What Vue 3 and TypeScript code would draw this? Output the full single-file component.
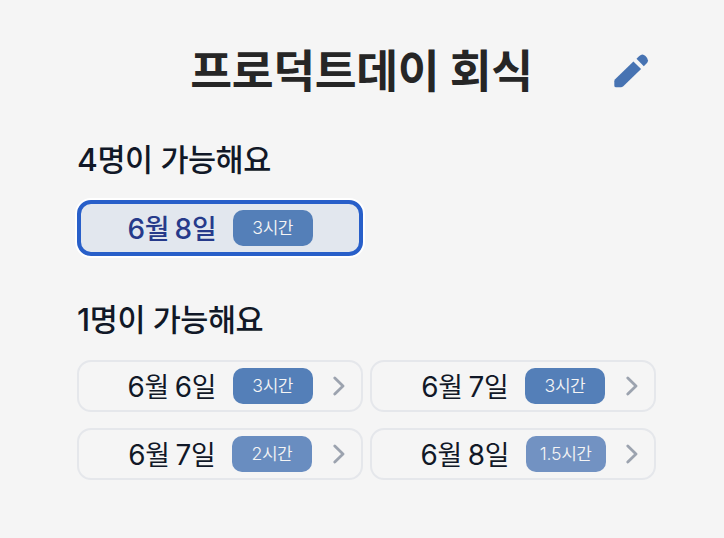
<script setup lang="ts">
interface Slot {
  month: string
  day: string
  hours: string
  tone: 'high' | 'mid' | 'low'
  selected?: boolean
}

interface Group {
  people: string
  slots: Slot[]
}

const groups: Group[] = [
  {
    people: '4',
    slots: [{ month: '6', day: '8', hours: '3', tone: 'high', selected: true }],
  },
  {
    people: '1',
    slots: [
      { month: '6', day: '6', hours: '3', tone: 'high' },
      { month: '6', day: '7', hours: '3', tone: 'high' },
      { month: '6', day: '7', hours: '2', tone: 'mid' },
      { month: '6', day: '8', hours: '1.5', tone: 'low' },
    ],
  },
]
</script>

<template>
  <main class="page">
    <header class="header">
      <h1 class="title">프로덕트데이 회식</h1>
      <button class="edit" aria-label="수정">
        <svg width="36" height="36" viewBox="0 0 36 36" fill="#4773b2">
          <path d="M20.4 8.4 L28.1 15.9 L10.3 33.2 Q9.1 34.3 7.9 34.3 H3.2 Q1.3 34.3 1.3 32.4 V28.2 Q1.3 27.1 2.1 26.3 Z" />
          <path d="M23.5 5.8 L26.3 3 Q29.4 0 32.5 3 Q36.6 7 34 10 L30.8 13.2 Z" />
        </svg>
      </button>
    </header>

    <section v-for="group in groups" :key="group.people" class="group">
      <h2 class="group-title"><span class="num">{{ group.people }}</span>명이 가능해요</h2>
      <div class="slots">
        <button
          v-for="(slot, i) in group.slots"
          :key="i"
          class="slot"
          :class="{ selected: slot.selected }"
        >
          <span class="date"><span class="num">{{ slot.month }}</span>월 <span class="num">{{ slot.day }}</span>일</span>
          <span class="badge" :class="slot.tone"><span><span class="num">{{ slot.hours }}</span>시간</span></span>
          <svg v-if="!slot.selected" class="chevron" width="12" height="20" viewBox="0 0 12 20">
            <path d="M1.8 2 L10 10 L1.8 18" fill="none" stroke="#9ca3af" stroke-width="2.8" stroke-linecap="round" stroke-linejoin="round" />
          </svg>
        </button>
      </div>
    </section>
  </main>
</template>

<style>
body {
  background: #f5f5f5;
}
</style>

<style scoped>
.page {
  box-sizing: border-box;
  height: 538px;
  padding: 38px 68px 0 77px;
  background: #f5f5f5;
  color: #111827;
  font-family: Inter, "Noto Sans CJK KR", sans-serif;
}
.header {
  display: grid;
  grid-template-columns: 1fr auto 1fr;
  align-items: center;
  height: 68px;
  margin-right: 10px;
}
.title {
  grid-column: 2;
  margin: 0;
  color: #262626;
  font-size: 45.5px;
  line-height: 68px;
  font-weight: 700;
  letter-spacing: -0.008em;
  white-space: nowrap;
}
.edit {
  justify-self: end;
  width: 36px;
  height: 36px;
  margin-right: -3px;
  margin-top: -2px;
  padding: 0;
  border: 0;
  background: none;
}
.edit svg,
.chevron {
  display: block;
}
.group-title {
  height: 48px;
  margin: 30px 0 16px;
  font-size: 30.5px;
  line-height: 48px;
  font-weight: 500;
  letter-spacing: -0.015em;
  white-space: nowrap;
}
.num {
  font-size: 1.04em;
  letter-spacing: -0.01em;
}
.group + .group .group-title {
  margin-top: 40px;
}
.slots {
  display: grid;
  grid-template-columns: 286px 286px;
  column-gap: 7px;
  row-gap: 16px;
}
.slot {
  box-sizing: border-box;
  position: relative;
  display: flex;
  align-items: center;
  justify-content: center;
  gap: 17px;
  height: 52px;
  padding: 0;
  border: 2px solid #e5e7eb;
  border-radius: 14px;
  background: transparent;
  color: #111827;
  font-family: inherit;
  font-size: 26.8px;
}
.slot.selected {
  height: 56px;
  border: 4px solid #285fc9;
  background: #e2e7ee;
  color: #263a8a;
  box-shadow: 0 0 0 2px #fff;
}
.date {
  padding-top: 2px;
  line-height: 38px;
  letter-spacing: -0.035em;
  white-space: nowrap;
}
.selected .date {
  font-weight: 500;
}
.badge {
  display: flex;
  align-items: center;
  justify-content: center;
  box-sizing: border-box;
  width: 80px;
  height: 36px;
  border-radius: 10px;
  color: #f5f5f5;
  font-size: 17px;
  line-height: 24px;
  font-weight: 350;
  letter-spacing: -0.035em;
}
.high {
  background: #547fb8;
}
.mid {
  background: #698dc0;
}
.low {
  background: #7292c2;
}
.chevron {
  position: absolute;
  top: 14px;
  right: 16px;
}
</style>
